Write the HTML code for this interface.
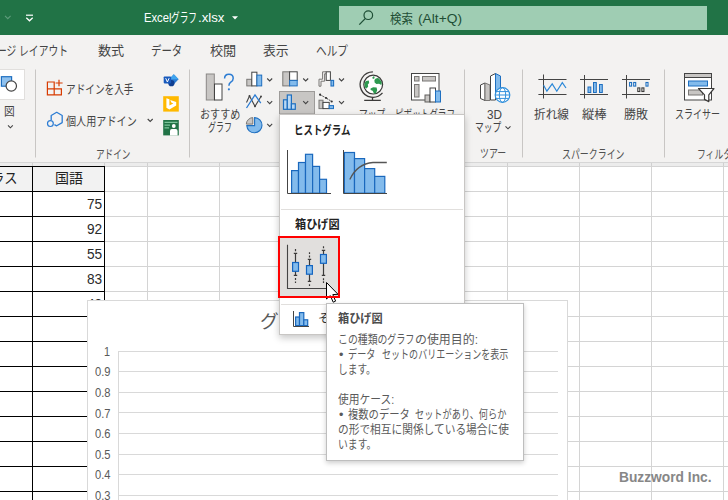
<!DOCTYPE html>
<html lang="ja">
<head>
<meta charset="utf-8">
<title>Excelグラフ.xlsx</title>
<style>
html,body{margin:0;padding:0;}
body{width:728px;height:500px;overflow:hidden;position:relative;background:#fff;font-family:"Liberation Sans","Noto Sans CJK JP",sans-serif;}
#rib,#sheet,#chart,#panel,#tip,#wm,#cur{position:absolute;left:0;top:0;width:728px;height:500px;overflow:hidden;}
#rib{z-index:3;height:166px;}
#sheet{z-index:1;}
#chart{z-index:4;}
#wm{z-index:5;}
#panel{z-index:6;}
#tip{z-index:7;}
#cur{z-index:8;}
.t{position:absolute;white-space:pre;transform-origin:0 50%;display:block;}
svg{position:absolute;left:0;top:0;}
.bx{position:absolute;box-sizing:border-box;}
</style>
</head>
<body>
<div id="rib">
<div class="bx" style="left:0;top:0;width:728px;height:34.5px;background:#217346;"></div>
<div class="bx" style="left:339px;top:5.5px;width:368px;height:24px;background:#9fcdb3;"></div>
<div class="bx" style="left:0;top:34.5px;width:728px;height:127.5px;background:#f3f2f1;"></div>
<div class="bx" style="left:0;top:162px;width:728px;height:4px;background:#ececec;border-top:1px solid #d6d6d6;"></div>
<svg width="728" height="166" viewBox="0 0 728 166" fill="none">
<g shape-rendering="crispEdges"><rect x="32" y="163" width="1" height="3" fill="#d0d0d0"/><rect x="104" y="163" width="1" height="3" fill="#d0d0d0"/><rect x="147" y="163" width="1" height="3" fill="#d0d0d0"/><rect x="219" y="163" width="1" height="3" fill="#d0d0d0"/><rect x="291" y="163" width="1" height="3" fill="#d0d0d0"/><rect x="363" y="163" width="1" height="3" fill="#d0d0d0"/><rect x="435" y="163" width="1" height="3" fill="#d0d0d0"/><rect x="507" y="163" width="1" height="3" fill="#d0d0d0"/><rect x="579" y="163" width="1" height="3" fill="#d0d0d0"/><rect x="651" y="163" width="1" height="3" fill="#d0d0d0"/><rect x="723" y="163" width="1" height="3" fill="#d0d0d0"/></g>
<!-- title bar icons -->
<path d="M5 15.8 L7.8 18.6 L10.6 15.8" stroke="#5f9c7c" stroke-width="1.1"/>
<path d="M26 15.2 H33" stroke="#fff" stroke-width="1.2"/>
<path d="M26.3 17.8 L29.5 20.8 L32.7 17.8" stroke="#fff" stroke-width="1.3"/>
<path d="M232 16.3 h6 l-3 3.2z" fill="#fff"/>
<!-- search magnifier -->
<circle cx="368.3" cy="15.2" r="4.3" stroke="#1e4e35" stroke-width="1.2"/>
<path d="M365.2 18.6 L359.3 24.6" stroke="#1e4e35" stroke-width="1.3"/>
<!-- group separators -->
<g stroke="#c8c6c4" stroke-width="1">
<path d="M35.5 69.5V157.5M189.5 69.5V157.5M464.5 69.5V157.5M522.5 69.5V157.5M664.5 69.5V157.5"/>
</g>
<!-- 図 group -->
<rect x="-1" y="69.5" width="25.5" height="30" fill="#fff" stroke="#e1dfdd" stroke-width="1"/>
<rect x="1.400" y="76.700" width="10.200" height="9.500" fill="#8fc1ee" stroke="#1e6fc0" stroke-width="1.2"/>
<circle cx="11.3" cy="86" r="5.2" fill="#fff" stroke="#444" stroke-width="1.2"/>
<path d="M8 125.300 L10.400 127.800 L12.800 125.300" stroke="#444" stroke-width="1.1"/>
<!-- get add-ins icon -->
<g stroke="#d83b01" stroke-width="1.2">
<path d="M47.4 82 H54.200 V94.800 H47.4 Z M47.4 88.800 H61.4 V94.800 H54.200"/>
<path d="M59 79.700 V86.300 M55.600 83 H62.600"/>
</g>
<!-- my add-ins icon -->
<path d="M51.200 120 V115.500 L56.700 112.300 L62.200 115.500 V122.600 L56.700 125.800 L54.400 124.600" stroke="#2b7cd3" stroke-width="1.3" stroke-linejoin="round"/>
<circle cx="50.4" cy="123.600" r="2.900" stroke="#2b7cd3" stroke-width="1.2"/>
<path d="M147.7 119 L150.2 121.5 L152.7 119" stroke="#444" stroke-width="1.1"/>
<!-- visio -->
<path d="M173.800 74.200 L178.600 79.200 L173.800 84.200 L169 79.200z" fill="#2b7cd3"/>
<path d="M173.800 74.200 L178.600 79.200 H169z" fill="#41a5ee"/>
<circle cx="171.400" cy="83.200" r="3.100" fill="#103f91"/>
<rect x="163.700" y="76.400" width="7.400" height="7" rx="0.800" fill="#185abd"/>
<path d="M165.700 78.200 L167.400 82 L169.100 78.200" stroke="#fff" stroke-width="1"/>
<!-- bing -->
<rect x="163.200" y="96.200" width="15.600" height="15.400" fill="#ffb900"/>
<path d="M166.400 98.200 L169.400 99.300 V105.600 L173.300 103.500 L171.300 102.500 L170.200 99.900 L176.200 102.100 V105.400 L169.400 109.400 L166.400 107.700z" fill="#fff"/>
<!-- people graph -->
<rect x="163.200" y="120" width="15.600" height="15.400" fill="#217346"/>
<path d="M164.500 122.300 H177.500 M164.500 125.200 H170 M164.500 127.800 H169" stroke="#7cc49a" stroke-width="1.200"/>
<circle cx="173.800" cy="126" r="1.900" fill="#fff"/>
<path d="M170 135.400 V131 q0-1.900 1.900-1.900 h3.800 q1.900 0 1.900 1.900 V135.400z" fill="#fff"/>
<!-- recommended charts -->
<rect x="206.3" y="74" width="8" height="26" fill="#c8c6c4" stroke="#8a8886" stroke-width="1"/>
<rect x="214.5" y="84" width="7.5" height="16" fill="#fff" stroke="#444" stroke-width="1"/>
<path d="M224.6 78.5 q0-4.3 4.3-4.3 q4.3 0 4.3 4 q0 2.5-2.4 4 q-1.9 1.3-1.9 3.6" stroke="#2b7cd3" stroke-width="1.5"/>
<circle cx="228.9" cy="89.3" r="1.1" fill="#2b7cd3"/>
<!-- column chart -->
<rect x="246.800" y="79.300" width="5" height="6.600" fill="#c8c6c4" stroke="#797775" stroke-width="1"/>
<rect x="251.800" y="72.200" width="5.100" height="13.700" fill="#fff" stroke="#444" stroke-width="1"/>
<rect x="256.900" y="75.100" width="4.800" height="10.800" fill="#83bbec" stroke="#1e6fc0" stroke-width="1"/>
<path d="M267.200 78.500 L269.700 81 L272.200 78.500" stroke="#444" stroke-width="1.1"/>
<!-- line chart -->
<path d="M246.500 102.500 L249.500 96 L255 106.300 L261 96.500" stroke="#444" stroke-width="1.1"/>
<path d="M246.500 108 L255 94.800 L260.800 103.200" stroke="#2b7cd3" stroke-width="1.3"/>
<g fill="#444"><circle cx="249.500" cy="96" r="1"/><circle cx="255" cy="106.300" r="1"/><circle cx="261" cy="96.600" r="1"/></g>
<path d="M267.200 101.200 L269.700 103.700 L272.200 101.200" stroke="#444" stroke-width="1.1"/>
<!-- pie chart -->
<path d="M252.800 117.600 A6.800 6.800 0 0 0 246.300 124.100 H252.800z" fill="#c8c6c4" stroke="#797775" stroke-width="1"/>
<path d="M254.600 117.600 V125.600 H246.800 A7.600 7.600 0 1 0 254.600 117.600z" fill="#83bbec" stroke="#1e6fc0" stroke-width="1.1"/>
<path d="M267.200 123.900 L269.700 126.400 L272.200 123.900" stroke="#444" stroke-width="1.1"/>
<!-- treemap -->
<rect x="282.800" y="71.800" width="6.800" height="14.100" fill="#c8c6c4" stroke="#797775" stroke-width="1"/>
<rect x="289.600" y="71.800" width="7.600" height="8.600" fill="#fff" stroke="#444" stroke-width="1"/>
<rect x="289.600" y="80.400" width="7.600" height="5.500" fill="#83bbec" stroke="#1e6fc0" stroke-width="1"/>
<path d="M303.200 78.500 L305.700 81 L308.200 78.500" stroke="#444" stroke-width="1.1"/>
<!-- histogram selected button -->
<rect x="279.500" y="91.500" width="35" height="22.500" fill="#c8c6c4" stroke="#9d9b99" stroke-width="1"/>
<g fill="#b9d8f4" stroke="#1e6fc0" stroke-width="1.200">
<rect x="283.500" y="99.800" width="3.800" height="9.500"/>
<rect x="287.300" y="95" width="4.100" height="14.300"/>
<rect x="291.400" y="103.800" width="3.900" height="5.500"/>
</g>
<path d="M303.200 101.200 L305.700 103.700 L308.200 101.200" stroke="#444" stroke-width="1.1"/>
<!-- waterfall -->
<path d="M319 86.200 V79.200 H322.600 V71.800 H326.200 M321 86.200 V81.200 H324.600 V73.800 H326.200 M319 86.200 H321" stroke="#797775" stroke-width="1"/>
<rect x="326.200" y="71.800" width="4.200" height="8.600" fill="#fff" stroke="#444" stroke-width="1"/>
<rect x="331" y="80.400" width="2.600" height="5.600" fill="#83bbec" stroke="#1e6fc0" stroke-width="1.1"/>
<path d="M339 78.500 L341.500 81 L344 78.500" stroke="#444" stroke-width="1.1"/>
<!-- combo -->
<rect x="319" y="100.200" width="4" height="8.400" fill="#c8c6c4" stroke="#797775" stroke-width="1"/>
<rect x="323" y="102.400" width="6.200" height="6.200" fill="#fff" stroke="#444" stroke-width="1"/>
<rect x="329.200" y="105.600" width="4.300" height="3" fill="#83bbec" stroke="#1e6fc0" stroke-width="1"/>
<path d="M320.100 94.700 L326.100 98 L331.700 101.500" stroke="#333" stroke-width="1" stroke-dasharray="1.600 1"/>
<g fill="#333"><circle cx="320.100" cy="94.700" r="1.100"/><circle cx="326.100" cy="98" r="1.100"/><circle cx="331.700" cy="101.500" r="1.100"/></g>
<path d="M339 101.200 L341.500 103.700 L344 101.200" stroke="#444" stroke-width="1.1"/>
<!-- globe / map -->
<circle cx="373.200" cy="84.600" r="9.400" fill="#fff" stroke="#3b3a39" stroke-width="1.200"/>
<path d="M364.400 84.600 q.2-2.200 1.600-3.600 l2.800-.4 l.4 2.400 l-1.400 1.400 l.4 2.200 l-1.600 2 l-1.600-1.200z" fill="#2e9950"/>
<path d="M372.300 77.400 l1.200-1.200 l1.200 .6 l-.4 1.800 l-1.400 .4z" fill="#2e9950"/>
<path d="M374.400 80 q1.200-2.200 3.800-2 q2.600 1.600 3.600 4.600 l-.4 2.400 l-2.400-1.200 l-2.600 .2 l-1.800-1.600z" fill="#2e9950"/>
<path d="M370.600 88.600 l2.600-1.400 l3.400 .4 l.6 2.600 l-1.400 3.200 l-1.800 .2 l-1.400-2.800 l-2-.8z" fill="#2e9950"/>
<path d="M372.900 71.900 A12.700 12.700 0 1 0 382.500 92.900" stroke="#3b3a39" stroke-width="1.300"/>
<path d="M372.500 97.200 V100.400 M364.200 100.400 H380.800" stroke="#3b3a39" stroke-width="1.300"/>
<!-- pivot chart -->
<rect x="411.5" y="73.5" width="27.5" height="26.5" fill="#fff" stroke="#444" stroke-width="1"/>
<rect x="414.5" y="76.5" width="4.5" height="4.5" fill="#c8c6c4" stroke="#797775" stroke-width="1"/>
<rect x="422.5" y="76.5" width="13" height="4.5" fill="#c8c6c4" stroke="#797775" stroke-width="1"/>
<rect x="414.5" y="84.5" width="4.5" height="12.5" fill="#c8c6c4" stroke="#797775" stroke-width="1"/>
<rect x="425" y="95" width="5" height="7" fill="#c8c6c4" stroke="#605e5c" stroke-width="1"/>
<rect x="430" y="88" width="5.5" height="14" fill="#fff" stroke="#444" stroke-width="1"/>
<rect x="435.5" y="91" width="5" height="11" fill="#83bbec" stroke="#1e6fc0" stroke-width="1"/>
<!-- 3D map -->
<path d="M480.5 85 L485 83 V100.5 L480.5 98.5z" fill="#fff" stroke="#444" stroke-width="1"/>
<path d="M485 83 L490 85 V100.5 H485z" fill="#c8c6c4" stroke="#797775" stroke-width="1"/>
<path d="M490.5 76 L495.5 73.5 V100 L490.5 100z" fill="#fff" stroke="#444" stroke-width="1"/>
<path d="M495.5 73.5 L500.5 76 V92 H495.5z" fill="#83bbec" stroke="#1e6fc0" stroke-width="1"/>
<circle cx="502.500" cy="95" r="7.300" fill="#fff" stroke="#2f8fdc" stroke-width="1.200"/>
<ellipse cx="502.500" cy="95" rx="3.200" ry="7.300" stroke="#2f8fdc" stroke-width="1"/>
<path d="M495.200 95 H509.800 M496.200 91.600 H508.800 M496.200 98.400 H508.800" stroke="#2f8fdc" stroke-width="1"/>
<path d="M505.5 126.3 L508 128.8 L510.5 126.3" stroke="#444" stroke-width="1.1"/>
<!-- sparkline: line -->
<path d="M538.400 79.500 H566.500 M538.400 94.500 H566.500 M543.500 74.500 V98.500" stroke="#444" stroke-width="1"/>
<path d="M543.600 85.200 L546.900 91.200 L552.200 83.900 L556.800 91.200 L562.300 82.600 L566 88" stroke="#2b88d8" stroke-width="1.200"/>
<!-- sparkline: column -->
<path d="M580 79.5 H608 M580 94.5 H608 M584.5 75 V98.5" stroke="#444" stroke-width="1"/>
<g fill="#83bbec" stroke="#1e6fc0" stroke-width="1">
<rect x="588" y="87" width="2.8" height="5.5"/><rect x="593.5" y="82.5" width="2.8" height="10"/><rect x="599.5" y="84.5" width="2.8" height="8"/>
</g>
<!-- sparkline: win/loss -->
<path d="M622 79.500 H650 M622 94.500 H650 M626.500 75 V98.500" stroke="#444" stroke-width="1"/>
<g fill="#fff" stroke="#1e6fc0" stroke-width="1.100">
<rect x="629.600" y="82.500" width="2" height="3.600"/><rect x="633.700" y="82.500" width="2" height="3.600"/><rect x="646" y="82.500" width="2" height="3.600"/>
</g>
<g fill="#fff" stroke="#3b3a39" stroke-width="1.100">
<rect x="637.800" y="87.900" width="2" height="3.600"/><rect x="641.900" y="87.900" width="2" height="3.600"/>
</g>
<!-- slicer -->
<rect x="684.5" y="73.500" width="27" height="26.500" fill="#fff" stroke="#444" stroke-width="1"/>
<rect x="684.5" y="73.5" width="27" height="4" fill="#c8c6c4" stroke="#444" stroke-width="1"/>
<rect x="688.5" y="81" width="19" height="5" fill="#83bbec" stroke="#1e6fc0" stroke-width="1"/>
<rect x="688.500" y="90" width="14" height="5" fill="#c8c6c4" stroke="#797775" stroke-width="1"/>
<path d="M698.500 88.500 H714 L708.800 94.800 V101.600 L704.500 99.400 V94.800z" fill="#fff" stroke="#3b3a39" stroke-width="1.200" stroke-linejoin="round"/>
</svg>
<span class="t" style="left:143.75px;top:8.15px;font-size:13px;line-height:19.5px;color:#fff;transform:scaleX(0.8633);">Excel</span>
<span class="t" style="left:171.4px;top:8.15px;font-size:13px;line-height:19.5px;color:#fff;transform:scaleX(0.6638);">グラフ</span>
<span class="t" style="left:197.8px;top:8.15px;font-size:13px;line-height:19.5px;color:#fff;transform:scaleX(1.0173);">.xlsx</span>
<span class="t" style="left:389.5px;top:8.55px;font-size:13px;line-height:19.5px;color:#1e4e35;transform:scaleX(0.8764);">検索</span>
<span class="t" style="left:418px;top:8.55px;font-size:13px;line-height:19.5px;color:#1e4e35;transform:scaleX(1.0590);">(Alt+Q)</span>
<span class="t" style="left:-3px;top:41.05px;font-size:13px;line-height:19.5px;color:#444;transform:scaleX(0.7524);">ージ レイアウト</span>
<span class="t" style="left:97.5px;top:41.05px;font-size:13px;line-height:19.5px;color:#444;transform:scaleX(1.0090);">数式</span>
<span class="t" style="left:151.25px;top:41.05px;font-size:13px;line-height:19.5px;color:#444;transform:scaleX(0.8010);">データ</span>
<span class="t" style="left:210px;top:41.05px;font-size:13px;line-height:19.5px;color:#444;transform:scaleX(1.0090);">校閲</span>
<span class="t" style="left:263.25px;top:41.05px;font-size:13px;line-height:19.5px;color:#444;transform:scaleX(0.9898);">表示</span>
<span class="t" style="left:316.25px;top:41.05px;font-size:13px;line-height:19.5px;color:#444;transform:scaleX(0.8202);">ヘルプ</span>
<span class="t" style="left:3.75px;top:103.2px;font-size:12px;line-height:18.0px;color:#444;transform:scaleX(0.8947);">図</span>
<span class="t" style="left:66.25px;top:81.3px;font-size:12px;line-height:18.0px;color:#444;transform:scaleX(0.8034);">アドインを入手</span>
<span class="t" style="left:66.25px;top:113.05px;font-size:12px;line-height:18.0px;color:#444;transform:scaleX(0.8421);">個人用アドイン</span>
<span class="t" style="left:95.5px;top:145.55px;font-size:12px;line-height:18.0px;color:#505050;transform:scaleX(0.7185);">アドイン</span>
<span class="t" style="left:199.5px;top:105.55px;font-size:12px;line-height:18.0px;color:#444;transform:scaleX(0.8435);">おすすめ</span>
<span class="t" style="left:208px;top:119.3px;font-size:12px;line-height:18.0px;color:#444;transform:scaleX(0.6664);">グラフ</span>
<span class="t" style="left:358.5px;top:105.55px;font-size:12px;line-height:18.0px;color:#444;transform:scaleX(0.7289);">マップ</span>
<span class="t" style="left:394.75px;top:105.55px;font-size:12px;line-height:18.0px;color:#444;transform:scaleX(0.7142);">ピボットグラフ</span>
<span class="t" style="left:486.5px;top:105.55px;font-size:12px;line-height:18.0px;color:#444;transform:scaleX(0.9776);">3D</span>
<span class="t" style="left:474.75px;top:119.3px;font-size:12px;line-height:18.0px;color:#444;transform:scaleX(0.7289);">マップ</span>
<span class="t" style="left:479.75px;top:145.3px;font-size:12px;line-height:18.0px;color:#505050;transform:scaleX(0.7440);">ツアー</span>
<span class="t" style="left:534px;top:105.55px;font-size:12px;line-height:18.0px;color:#444;transform:scaleX(0.9718);">折れ線</span>
<span class="t" style="left:581.6px;top:105.55px;font-size:12px;line-height:18.0px;color:#444;transform:scaleX(1.0243);">縦棒</span>
<span class="t" style="left:624px;top:105.55px;font-size:12px;line-height:18.0px;color:#444;transform:scaleX(0.9993);">勝敗</span>
<span class="t" style="left:674.75px;top:105.55px;font-size:12px;line-height:18.0px;color:#444;transform:scaleX(0.7498);">スライサー</span>
<span class="t" style="left:562.25px;top:145.55px;font-size:12px;line-height:18.0px;color:#505050;transform:scaleX(0.7439);">スパークライン</span>
<span class="t" style="left:697.25px;top:145.55px;font-size:12px;line-height:18.0px;color:#505050;transform:scaleX(0.7320);">フィルター</span>
</div>
<div id="sheet">
<svg width="728" height="500" viewBox="0 0 728 500" shape-rendering="crispEdges">
<rect x="0" y="166" width="104" height="25" fill="#f2f2f2"/>
<rect x="32" y="162" width="1" height="338" fill="#d4d4d4"/>
<rect x="104" y="162" width="1" height="338" fill="#d4d4d4"/>
<rect x="147" y="162" width="1" height="338" fill="#d4d4d4"/>
<rect x="219" y="162" width="1" height="338" fill="#d4d4d4"/>
<rect x="291" y="162" width="1" height="338" fill="#d4d4d4"/>
<rect x="363" y="162" width="1" height="338" fill="#d4d4d4"/>
<rect x="435" y="162" width="1" height="338" fill="#d4d4d4"/>
<rect x="507" y="162" width="1" height="338" fill="#d4d4d4"/>
<rect x="579" y="162" width="1" height="338" fill="#d4d4d4"/>
<rect x="651" y="162" width="1" height="338" fill="#d4d4d4"/>
<rect x="723" y="162" width="1" height="338" fill="#d4d4d4"/>
<rect x="0" y="166" width="728" height="1" fill="#d4d4d4"/>
<rect x="0" y="191" width="728" height="1" fill="#d4d4d4"/>
<rect x="0" y="216" width="728" height="1" fill="#d4d4d4"/>
<rect x="0" y="241" width="728" height="1" fill="#d4d4d4"/>
<rect x="0" y="266" width="728" height="1" fill="#d4d4d4"/>
<rect x="0" y="291" width="728" height="1" fill="#d4d4d4"/>
<rect x="0" y="316" width="728" height="1" fill="#d4d4d4"/>
<rect x="0" y="341" width="728" height="1" fill="#d4d4d4"/>
<rect x="0" y="366" width="728" height="1" fill="#d4d4d4"/>
<rect x="0" y="391" width="728" height="1" fill="#d4d4d4"/>
<rect x="0" y="416" width="728" height="1" fill="#d4d4d4"/>
<rect x="0" y="441" width="728" height="1" fill="#d4d4d4"/>
<rect x="0" y="466" width="728" height="1" fill="#d4d4d4"/>
<rect x="0" y="491" width="728" height="1" fill="#d4d4d4"/>
<rect x="32" y="166" width="1" height="334" fill="#000"/>
<rect x="104" y="166" width="1" height="334" fill="#000"/>
<rect x="0" y="166" width="105" height="1" fill="#000"/>
<rect x="0" y="191" width="105" height="1" fill="#000"/>
<rect x="0" y="216" width="105" height="1" fill="#000"/>
<rect x="0" y="241" width="105" height="1" fill="#000"/>
<rect x="0" y="266" width="105" height="1" fill="#000"/>
<rect x="0" y="291" width="105" height="1" fill="#000"/>
<rect x="0" y="316" width="105" height="1" fill="#000"/>
<rect x="0" y="341" width="105" height="1" fill="#000"/>
<rect x="0" y="366" width="105" height="1" fill="#000"/>
<rect x="0" y="391" width="105" height="1" fill="#000"/>
<rect x="0" y="416" width="105" height="1" fill="#000"/>
<rect x="0" y="441" width="105" height="1" fill="#000"/>
<rect x="0" y="466" width="105" height="1" fill="#000"/>
<rect x="0" y="491" width="105" height="1" fill="#000"/>
</svg>
<span class="t" style="left:-22px;top:168.25px;font-size:14px;line-height:21.0px;color:#222;transform:scaleX(0.9465);">クラス</span>
<span class="t" style="left:55px;top:168.25px;font-size:14px;line-height:21.0px;color:#222;">国語</span>
<span class="t" style="left:86.8px;top:192.75px;font-size:15px;line-height:22.5px;color:#2a2a2a;transform:scaleX(0.9109);">75</span>
<span class="t" style="left:86.8px;top:217.75px;font-size:15px;line-height:22.5px;color:#2a2a2a;transform:scaleX(0.9109);">92</span>
<span class="t" style="left:86.8px;top:242.75px;font-size:15px;line-height:22.5px;color:#2a2a2a;transform:scaleX(0.9109);">55</span>
<span class="t" style="left:86.8px;top:267.75px;font-size:15px;line-height:22.5px;color:#2a2a2a;transform:scaleX(0.9109);">83</span>
<span class="t" style="left:86.8px;top:292.75px;font-size:15px;line-height:22.5px;color:#2a2a2a;transform:scaleX(0.9109);">48</span>
</div>
<div id="chart">
<div class="bx" style="left:87px;top:300px;width:481px;height:210px;background:#fff;border:1px solid #d9d9d9;"></div>
<svg width="728" height="500" viewBox="0 0 728 500" shape-rendering="crispEdges">
<rect x="118" y="351" width="440" height="1" fill="#d9d9d9"/>
<rect x="118" y="371" width="440" height="1" fill="#d9d9d9"/>
<rect x="118" y="392" width="440" height="1" fill="#d9d9d9"/>
<rect x="118" y="412" width="440" height="1" fill="#d9d9d9"/>
<rect x="118" y="433" width="440" height="1" fill="#d9d9d9"/>
<rect x="118" y="454" width="440" height="1" fill="#d9d9d9"/>
<rect x="118" y="474" width="440" height="1" fill="#d9d9d9"/>
<rect x="118" y="495" width="440" height="1" fill="#d9d9d9"/>
<rect x="118" y="351" width="1" height="149" fill="#d9d9d9"/>
</svg>
<span class="t" style="left:259.8px;top:308.1px;font-size:18.67px;line-height:28.01px;color:#595959;transform:scaleX(1.0031);">グラフ タイトル</span>
<span class="t" style="left:103.5px;top:342.6px;font-size:12px;line-height:18.0px;color:#595959;transform:scaleX(0.8972);">1</span>
<span class="t" style="left:94.5px;top:363.2px;font-size:12px;line-height:18.0px;color:#595959;transform:scaleX(0.9288);">0.9</span>
<span class="t" style="left:94.5px;top:383.9px;font-size:12px;line-height:18.0px;color:#595959;transform:scaleX(0.9288);">0.8</span>
<span class="t" style="left:94.5px;top:404.5px;font-size:12px;line-height:18.0px;color:#595959;transform:scaleX(0.9288);">0.7</span>
<span class="t" style="left:94.5px;top:425.1px;font-size:12px;line-height:18.0px;color:#595959;transform:scaleX(0.9288);">0.6</span>
<span class="t" style="left:94.5px;top:445.8px;font-size:12px;line-height:18.0px;color:#595959;transform:scaleX(0.9288);">0.5</span>
<span class="t" style="left:94.5px;top:466.4px;font-size:12px;line-height:18.0px;color:#595959;transform:scaleX(0.9288);">0.4</span>
<span class="t" style="left:94.5px;top:487.0px;font-size:12px;line-height:18.0px;color:#595959;transform:scaleX(0.9288);">0.3</span>
</div>
<div id="wm">
<span class="t" style="left:619.25px;top:465.48px;font-size:15.5px;line-height:23.25px;color:#878787;font-weight:700;transform:scaleX(0.8882);">Buzzword Inc.</span>
</div>
<div id="panel">
<div class="bx" style="left:279px;top:114px;width:186px;height:221px;background:#fff;border:1px solid #c8c6c4;box-shadow:0 3px 7px rgba(0,0,0,.22);"></div>
<div class="bx" style="left:281px;top:209px;width:182px;height:1px;background:#e1dfdd;"></div>
<div class="bx" style="left:281px;top:304px;width:182px;height:1px;background:#e1dfdd;"></div>
<div class="bx" style="left:280px;top:238px;width:58px;height:58px;background:#e1dfdd;"></div>
<svg width="728" height="500" viewBox="0 0 728 500" fill="none">
<!-- histogram 1 -->
<g fill="#83bbec" stroke="#1a68bd" stroke-width="1.200">
<rect x="291.6" y="170.6" width="6.9" height="22.6"/>
<rect x="298.5" y="162.5" width="7" height="30.7"/>
<rect x="305.5" y="154.3" width="7.1" height="38.9"/>
<rect x="312.6" y="166.4" width="7" height="26.8"/>
<rect x="319.6" y="179.3" width="6.9" height="13.9"/>
</g>
<path d="M287.500 150 V193.500 H331" stroke="#444" stroke-width="1"/>
<!-- histogram 2 (pareto) -->
<g fill="#83bbec" stroke="#1a68bd" stroke-width="1.200">
<rect x="344.4" y="152.5" width="10.1" height="40.7"/>
<rect x="354.5" y="158.600" width="10.1" height="34.6"/>
<rect x="364.6" y="168.600" width="10.1" height="24.6"/>
<rect x="374.7" y="176.4" width="10.1" height="16.8"/>
</g>
<path d="M343.500 150 V193.500 H387" stroke="#444" stroke-width="1"/>
<path d="M349.800 179.500 C354 170.500 361 163.400 373 162.500 H386.800" stroke="#555" stroke-width="1.300"/>
<!-- box & whisker -->
<path d="M287.500 244.700 V288.500 H327" stroke="#444" stroke-width="1.1"/>
<g stroke="#3b3a39" stroke-width="1.200">
<path d="M295.500 253.300 V275.300 M293.800 253.300 H297.200 M293.800 275.300 H297.200 M295.500 249.100 V251.200 M295.500 278 V280 M295.500 281.400 V282.900"/>
<path d="M309.500 259.400 V281.400 M307.800 259.400 H311.200 M307.800 281.400 H311.200 M309.500 252.300 V254.100 M309.500 255.500 V257.500 M309.500 284.200 V286"/>
<path d="M323.500 250.400 V275.300 M321.800 250.400 H325.200 M321.800 275.300 H325.200 M323.500 246.200 V248.300 M323.500 278.300 V280.300 M323.500 281.200 V283"/>
</g>
<g fill="#83bbec" stroke="#1565c0" stroke-width="1.200">
<rect x="292.600" y="262.500" width="5.900" height="8.800"/>
<rect x="306.500" y="265.600" width="5.900" height="8.600"/>
<rect x="320.500" y="254.500" width="5.900" height="8.800"/>
</g>
<!-- more charts small icon -->
<g fill="#83bbec" stroke="#1a68bd" stroke-width="1.200">
<rect x="295.600" y="317" width="3.900" height="8.600"/>
<rect x="299.500" y="312.600" width="4.300" height="13"/>
<rect x="303.800" y="319.800" width="3.900" height="5.800"/>
</g>
<path d="M293.500 311 V326.500 H309" stroke="#444" stroke-width="1"/>
</svg>
<span class="t" style="left:294.1px;top:122.3px;font-size:12px;line-height:18.0px;color:#222;font-weight:700;transform:scaleX(0.7873);">ヒストグラム</span>
<span class="t" style="left:295.4px;top:216.3px;font-size:12px;line-height:18.0px;color:#222;font-weight:700;transform:scaleX(0.9289);">箱ひげ図</span>
<span class="t" style="left:317.7px;top:309.6px;font-size:12px;line-height:18.0px;color:#333;transform:scaleX(1.0096);">その他の統計グラフ(M)...</span>
</div>
<div id="tip">
<div class="bx" style="left:326px;top:303px;width:198px;height:158px;background:#fff;border:1px solid #bebebe;box-shadow:0 2px 5px rgba(0,0,0,.2);"></div>
<span class="t" style="left:337.7px;top:309.8px;font-size:12px;line-height:18.0px;color:#4c4c4c;font-weight:700;transform:scaleX(0.9309);">箱ひげ図</span>
<span class="t" style="left:337.7px;top:330.8px;font-size:12px;line-height:18.0px;color:#5a5a5a;transform:scaleX(0.8231);">この種類の</span>
<span class="t" style="left:387.1px;top:330.8px;font-size:12px;line-height:18.0px;color:#5a5a5a;transform:scaleX(0.7636);">グラフ</span>
<span class="t" style="left:414.6px;top:330.8px;font-size:12px;line-height:18.0px;color:#5a5a5a;transform:scaleX(0.9946);">の使用目的:</span>
<span class="t" style="left:338.8px;top:345.8px;font-size:12px;line-height:18.0px;color:#5a5a5a;transform:scaleX(1.0468);">•</span>
<span class="t" style="left:347.9px;top:345.8px;font-size:12px;line-height:18.0px;color:#5a5a5a;transform:scaleX(0.7608);">データ</span>
<span class="t" style="left:382.2px;top:345.8px;font-size:12px;line-height:18.0px;color:#5a5a5a;transform:scaleX(0.7534);">セットのバリエーションを表示</span>
<span class="t" style="left:337.7px;top:360.8px;font-size:12px;line-height:18.0px;color:#5a5a5a;transform:scaleX(0.8075);">します。</span>
<span class="t" style="left:338px;top:390.8px;font-size:12px;line-height:18.0px;color:#5a5a5a;transform:scaleX(0.8956);">使用ケース:</span>
<span class="t" style="left:338.8px;top:405.8px;font-size:12px;line-height:18.0px;color:#5a5a5a;transform:scaleX(1.0468);">•</span>
<span class="t" style="left:347.9px;top:405.8px;font-size:12px;line-height:18.0px;color:#5a5a5a;transform:scaleX(0.8581);">複数のデータ</span>
<span class="t" style="left:414.6px;top:405.8px;font-size:12px;line-height:18.0px;color:#5a5a5a;transform:scaleX(0.7647);">セットがあり、何らか</span>
<span class="t" style="left:337.7px;top:420.8px;font-size:12px;line-height:18.0px;color:#5a5a5a;transform:scaleX(0.8917);">の形で相互に関係している場合に使</span>
<span class="t" style="left:337.7px;top:435.8px;font-size:12px;line-height:18.0px;color:#5a5a5a;transform:scaleX(0.8182);">います。</span>
</div>
<div id="cur">
<svg width="728" height="500" viewBox="0 0 728 500">
<path d="M326.5 282.5 L326.5 299 L330.3 295.6 L333.2 302.2 L335.6 301.1 L332.8 294.6 L338 294.3 Z" fill="#fff" stroke="#000" stroke-width="1" stroke-linejoin="miter"/>
</svg>
<div class="bx" style="left:278px;top:236px;width:62px;height:62px;border:2px solid #ff0000;"></div>
</div>
</body>
</html>
